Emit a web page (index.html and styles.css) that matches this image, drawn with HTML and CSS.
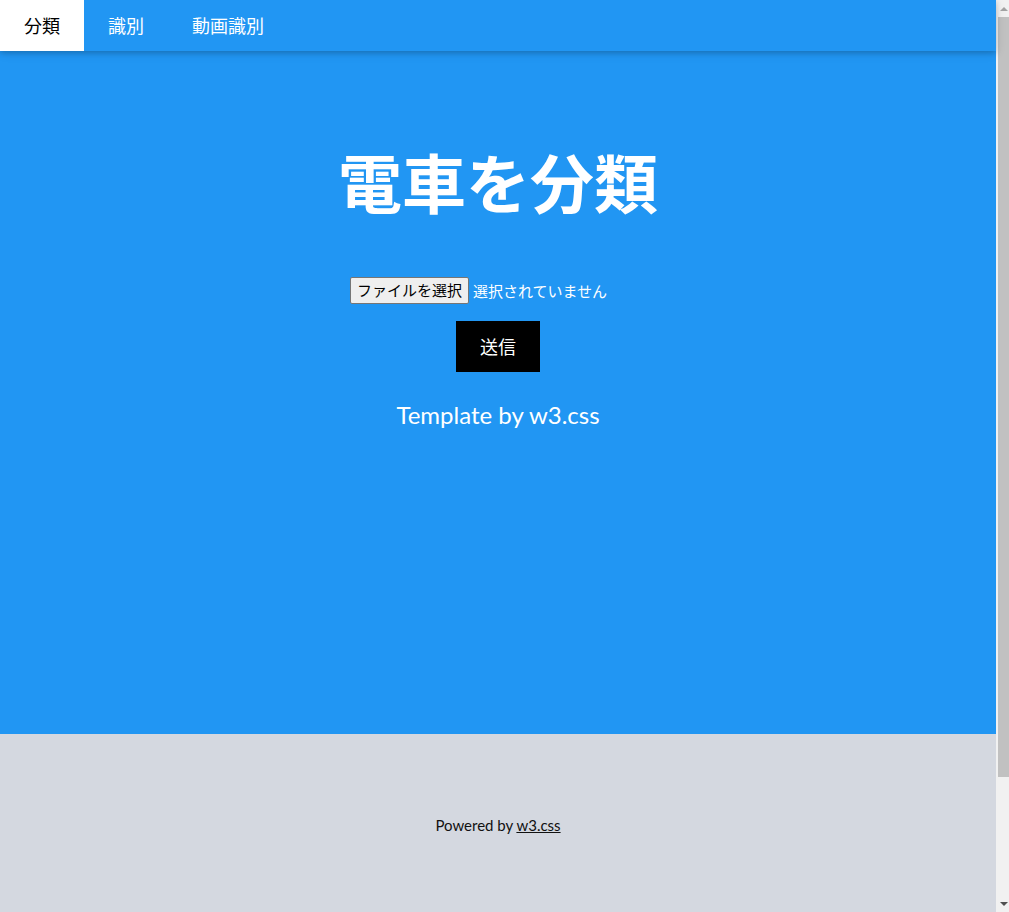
FILE: index.html
```html
<!DOCTYPE html>
<html lang="ja">
<head>
<meta charset="utf-8">
<title>電車を分類</title>
<link rel="stylesheet" href="styles.css">
</head>
<body>
<div class="page">
  <div class="topbar">
    <a class="tab active" href="#">分類</a>
    <a class="tab" href="#">識別</a>
    <a class="tab" href="#">動画識別</a>
  </div>
  <header class="hero">
    <h1 class="title">電車を分類</h1>
    <form class="upload">
      <label class="file-row">
        <input type="file" class="file-input">
        <span class="file-button">ファイルを選択</span>
        <span class="file-name">選択されていません</span>
      </label>
      <button type="button" class="send">送信</button>
    </form>
    <p class="credit">Template by w3.css</p>
  </header>
  <footer class="footer">
    <p class="powered">Powered by <a href="#">w3.css</a></p>
  </footer>
</div>
<div class="scrollbar" aria-hidden="true">
  <div class="sb-button"><span class="arrow-up"></span></div>
  <div class="sb-track"><div class="sb-thumb"></div></div>
  <div class="sb-button"><span class="arrow-down"></span></div>
</div>
</body>
</html>
```
FILE: styles.css
```css
body {
  margin: 0;
  display: flex;
  align-items: flex-start;
  font-family: Lato, "Noto Sans CJK JP", sans-serif;
  font-size: 15px;
  line-height: 1.5;
  color: #000;
}
.page {
  flex: 1;
  min-width: 0;
}
.scrollbar {
  position: sticky;
  top: 0;
  width: 13px;
  height: 100vh;
  flex: none;
  display: flex;
  flex-direction: column;
  background: #f1f1f1;
}
.sb-button {
  height: 17px;
  flex: none;
  display: flex;
  align-items: center;
  justify-content: center;
  padding-left: 2px;
}
.arrow-up {
  width: 0;
  height: 0;
  border-left: 4px solid transparent;
  border-right: 4px solid transparent;
  border-bottom: 4px solid #a3a3a3;
}
.arrow-down {
  width: 0;
  height: 0;
  border-left: 4px solid transparent;
  border-right: 4px solid transparent;
  border-top: 4px solid #505050;
}
.sb-track {
  flex: 1;
  padding-left: 2px;
}
.sb-thumb {
  height: 760px;
  background: #c1c1c1;
}
.topbar {
  display: flex;
  background: #2196f3;
  box-shadow: 0 2px 5px 0 rgba(0,0,0,0.16), 0 2px 10px 0 rgba(0,0,0,0.12);
  position: relative;
  z-index: 1;
}
.tab {
  display: block;
  padding: 12px 24px;
  font-size: 18px;
  line-height: 27px;
  height: 27px;
  color: #fff;
  text-decoration: none;
  font-family: "Noto Sans CJK JP", sans-serif;
}
.tab.active {
  background: #fff;
  color: #000;
}
.hero {
  background: #2196f3;
  color: #fff;
  text-align: center;
  padding: 64px 16px 0;
  height: 619px;
}
.title {
  margin: 17px 0 23px;
  font-size: 64px;
  line-height: 96px;
  height: 96px;
  font-weight: 700;
  font-family: "Noto Sans CJK JP", sans-serif;
}
.upload {
  margin: 0;
  padding-top: 26px;
  display: flex;
  flex-direction: column;
  align-items: center;
}
.file-row {
  height: 27px;
  width: 296px;
  display: flex;
  align-items: center;
  gap: 4px;
  font-family: "Noto Sans CJK JP", sans-serif;
  font-size: 15px;
}
.file-input {
  display: none;
}
.file-button {
  display: block;
  box-sizing: border-box;
  height: 27px;
  line-height: 23px;
  padding: 0 6px;
  background: #efefef;
  color: #000;
  border: 1px solid #767676;
  border-radius: 2px;
}
.file-name {
  color: #fff;
  line-height: 27px;
  white-space: nowrap;
}
.send {
  margin-top: 17px;
  background: #000;
  color: #fff;
  border: none;
  padding: 12px 24px;
  font-size: 18px;
  line-height: 27px;
  font-family: "Noto Sans CJK JP", sans-serif;
}
.credit {
  margin: 25px 0 0;
  font-size: 24px;
  line-height: 36px;
}
.footer {
  background: #d4d8e0;
  text-align: center;
  padding: 80px 16px 217px;
}
.powered {
  margin: 0;
  color: #111;
}
.powered a {
  color: inherit;
}
```
